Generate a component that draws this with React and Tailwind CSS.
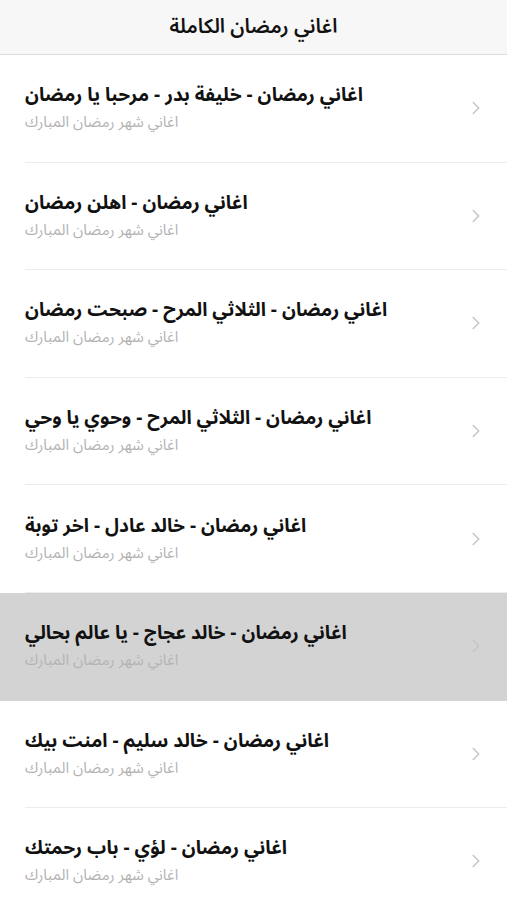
import { ChevronRight } from 'lucide-react';
import clsx from 'clsx';

const songs = [
  'اغاني رمضان - خليفة بدر - مرحبا يا رمضان',
  'اغاني رمضان - اهلن رمضان',
  'اغاني رمضان - الثلاثي المرح - صبحت رمضان',
  'اغاني رمضان - الثلاثي المرح - وحوي يا وحي',
  'اغاني رمضان - خالد عادل - اخر توبة',
  'اغاني رمضان - خالد عجاج - يا عالم بحالي',
  'اغاني رمضان - خالد سليم - امنت بيك',
  'اغاني رمضان - لؤي - باب رحمتك',
];

const font = { fontFamily: '"Noto Sans Arabic", "DejaVu Sans", "Noto Sans", sans-serif' };

const SongRow = ({ title, active, last }) => (
  <div className={clsx('flex h-[107.6px] items-center', active ? 'bg-[#d3d3d3]' : 'bg-white')}>
    <div
      className={clsx(
        'ml-[25px] flex h-full flex-1 items-center border-b',
        active || last ? 'border-transparent' : 'border-[#ececec]',
      )}
    >
      <div className="flex flex-1 flex-col items-start">
        <span dir="rtl" className="text-[19px] font-bold leading-[28px] text-[#111]">
          {title}
        </span>
        <span dir="rtl" className="text-[15px] leading-[26px] text-[#b3b3b3]">
          اغاني شهر رمضان المبارك
        </span>
      </div>
      <ChevronRight className="mr-[20px] h-[22px] w-[22px] text-[#c4c4c4]" strokeWidth={1.6} />
    </div>
  </div>
);

export default function App() {
  return (
    <div className="min-h-[900px] w-full bg-white" style={font}>
      <div className="flex h-[55px] items-center justify-center border-b border-[#dcdcdc] bg-[#f7f7f7]">
        <span dir="rtl" className="text-[20px] font-semibold text-[#111]">
          اغاني رمضان الكاملة
        </span>
      </div>
      {songs.map((title, i) => (
        <SongRow key={title} title={title} active={i === 5} last={i === songs.length - 1} />
      ))}
    </div>
  );
}
